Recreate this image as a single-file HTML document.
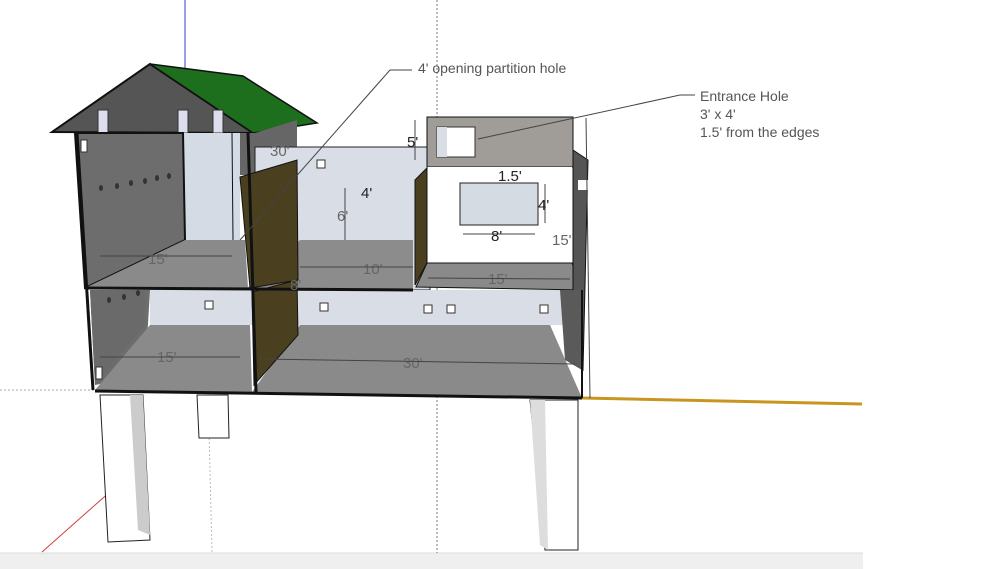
<!DOCTYPE html>
<html><head><meta charset="utf-8"><style>
html,body{margin:0;padding:0;background:#fff;width:988px;height:569px;overflow:hidden}
svg{display:block}
text{font-family:"Liberation Sans",sans-serif}
</style></head><body>
<svg width="988" height="569" viewBox="0 0 988 569" xmlns="http://www.w3.org/2000/svg">
<rect x="0" y="553" width="863" height="16" fill="#efefef"/>
<line x1="0" y1="553" x2="863" y2="553" fill="none" stroke="#ddd"/>
<!-- axes -->
<line x1="185" y1="0" x2="185" y2="135" stroke="#3a3ad8" stroke-width="1"/>
<line x1="437" y1="0" x2="437" y2="553" stroke="#777" stroke-width="1" stroke-dasharray="2,2"/>
<line x1="0" y1="390" x2="95" y2="390" stroke="#aaa" stroke-dasharray="2,2"/>
<line x1="42" y1="552" x2="112" y2="490" stroke="#d04040"/>
<line x1="208" y1="390" x2="212" y2="553" stroke="#bbb" stroke-dasharray="2,2"/>
<line x1="582" y1="398" x2="862" y2="404" stroke="#c8961e" stroke-width="3"/>
<!-- legs -->
<polygon points="100,395 143,395 150,540 108,542" fill="#fff" stroke="#222"/>
<polygon points="130,395 143,395 150,535 138,530" fill="#ccc"/>
<polygon points="197,395 228,395 229,438 199,438" fill="#fff" stroke="#222"/>
<polygon points="530,400 578,400 578,550 545,550" fill="#fff" stroke="#222"/>
<polygon points="530,400 545,400 548,550 540,545" fill="#ddd"/>
<!-- roof -->
<polygon points="150,64 52,132 253,133" fill="#555" stroke="#111" stroke-width="2"/>
<polygon points="150,64 243,76 317,123 253,133" fill="#1d6e1d" stroke="#111" stroke-width="1.5"/>
<rect x="98" y="110" width="10" height="23" fill="#dde" stroke="#333"/>
<rect x="178" y="110" width="10" height="23" fill="#dde" stroke="#333"/>
<rect x="213" y="110" width="10" height="23" fill="#dde" stroke="#333"/>
<polygon points="75,133 255,133 255,160 232,160 232,133" fill="#555"/>
<polygon points="232,133 255,133 297,120 297,160 250,175 232,175" fill="#666"/>
<!-- middle back wall -->
<polygon points="255,147 430,147 430,290 255,290" fill="#d8dde6" stroke="#222"/>
<polygon points="200,290 565,290 565,325 200,325" fill="#d8dde6"/>
<!-- upper left room -->
<polygon points="183,133 240,133 240,240 185,240" fill="#d5dbe4"/>
<polygon points="75,133 183,133 185,240 85,288" fill="#6d6d6d" stroke="#111" stroke-width="2"/>
<polygon points="85,288 185,240 245,240 248,288" fill="#8a8a8a"/>
<!-- lower left -->
<polygon points="90,290 150,290 145,375 95,385" fill="#6d6d6d"/>
<polygon points="150,290 200,290 200,325 150,325" fill="#d8dde6"/>
<polygon points="95,390 150,325 250,325 252,392" fill="#8a8a8a"/>
<polygon points="90,290 145,290 145,325 95,385" fill="#6a6a6a"/>
<!-- middle floor -->
<polygon points="245,290 300,240 413,240 413,290" fill="#8c8c8c"/>
<!-- lower big floor -->
<polygon points="252,392 300,325 550,325 582,398" fill="#8a8a8a"/>
<!-- brown partitions -->
<polygon points="240,177 297,160 298,280 250,288" fill="#4a4020" stroke="#111"/>
<polygon points="252,292 297,280 298,335 254,385" fill="#4a4020" stroke="#111"/>
<!-- right box -->
<polygon points="427,117 573,117 573,167 427,167" fill="#a09c98" stroke="#111"/>
<rect x="437" y="127" width="38" height="30" fill="#fff" stroke="#333"/>
<rect x="437" y="127" width="10" height="30" fill="#d8dde6"/>
<polygon points="427,167 572,167 572,263 427,263" fill="#fff"/>
<rect x="460" y="183" width="78" height="42" fill="#d5dbe3" stroke="#222"/>
<polygon points="415,180 427,168 427,263 415,285" fill="#4a4020" stroke="#111"/>
<polygon points="416,287 427,263 572,263 582,290" fill="#8a8a8a" stroke="#111"/>
<polygon points="573,150 588,160 583,370 573,360" fill="#555" stroke="#111"/>
<polygon points="560,290 583,290 582,370 565,360" fill="#5a5a5a"/>
<rect x="578" y="180" width="10" height="10" fill="#fff"/>
<!-- lines -->
<line x1="77" y1="133" x2="93" y2="390" stroke="#111" stroke-width="3"/>
<line x1="232" y1="133" x2="233" y2="240" stroke="#111" stroke-width="1"/>
<line x1="248" y1="133" x2="256" y2="392" stroke="#111" stroke-width="3"/>
<line x1="86" y1="288" x2="413" y2="290" stroke="#111" stroke-width="3"/>
<line x1="95" y1="391" x2="582" y2="398" stroke="#111" stroke-width="3"/>
<line x1="582" y1="290" x2="582" y2="398" stroke="#111" stroke-width="2"/>
<!-- small details -->
<g fill="#fff" stroke="#333">
<rect x="205" y="301" width="8" height="8"/><rect x="320" y="303" width="8" height="8"/><rect x="424" y="305" width="8" height="8"/>
<rect x="447" y="305" width="8" height="8"/><rect x="540" y="305" width="8" height="8"/><rect x="317" y="160" width="8" height="8"/>
<rect x="96" y="367" width="6" height="12"/><rect x="81" y="140" width="6" height="12"/>
</g>
<g fill="#333"><ellipse cx="101" cy="188" rx="2" ry="3"/><ellipse cx="117" cy="186" rx="2" ry="3"/><ellipse cx="131" cy="183" rx="2" ry="3"/><ellipse cx="145" cy="181" rx="2" ry="3"/><ellipse cx="157" cy="178" rx="2" ry="3"/><ellipse cx="169" cy="176" rx="2" ry="3"/><ellipse cx="109" cy="300" rx="2" ry="3"/><ellipse cx="124" cy="297" rx="2" ry="3"/><ellipse cx="138" cy="293" rx="2" ry="3"/></g>
<!-- dimensions -->
<g fill="#666" font-size="15">
<text x="148" y="264">15'</text><text x="157" y="362">15'</text><text x="403" y="368">30'</text>
<text x="363" y="274">10'</text><text x="290" y="290">8'</text><text x="488" y="284">15'</text>
<text x="337" y="221">6'</text><text x="552" y="245">15'</text><text x="270" y="156">30'</text>
</g>
<g fill="#222" font-size="15">
<text x="498" y="181">1.5'</text><text x="538" y="210">4'</text><text x="491" y="241">8'</text><text x="407" y="147">5'</text><text x="361" y="198">4'</text>
</g>
<g stroke="#444" stroke-width="1">
<line x1="100" y1="256" x2="232" y2="256"/><line x1="100" y1="357" x2="240" y2="357"/>
<line x1="260" y1="359" x2="575" y2="364"/><line x1="428" y1="278" x2="570" y2="279"/>
<line x1="463" y1="234" x2="535" y2="234"/><line x1="545" y1="184" x2="545" y2="223"/>
<line x1="345" y1="188" x2="345" y2="240"/><line x1="415" y1="120" x2="415" y2="160"/>
<line x1="586" y1="118" x2="590" y2="398"/><line x1="300" y1="267" x2="413" y2="267"/>
<line x1="240" y1="240" x2="390" y2="70"/><line x1="390" y1="70" x2="412" y2="70"/>
<line x1="478" y1="139" x2="680" y2="95"/><line x1="680" y1="95" x2="695" y2="95"/>
</g>
<g fill="#555" font-size="14">
<text x="418" y="73">4' opening partition hole</text>
<text x="700" y="101">Entrance Hole</text>
<text x="700" y="119">3' x 4'</text>
<text x="700" y="137">1.5' from the edges</text>
</g>
</svg>
</body></html>
